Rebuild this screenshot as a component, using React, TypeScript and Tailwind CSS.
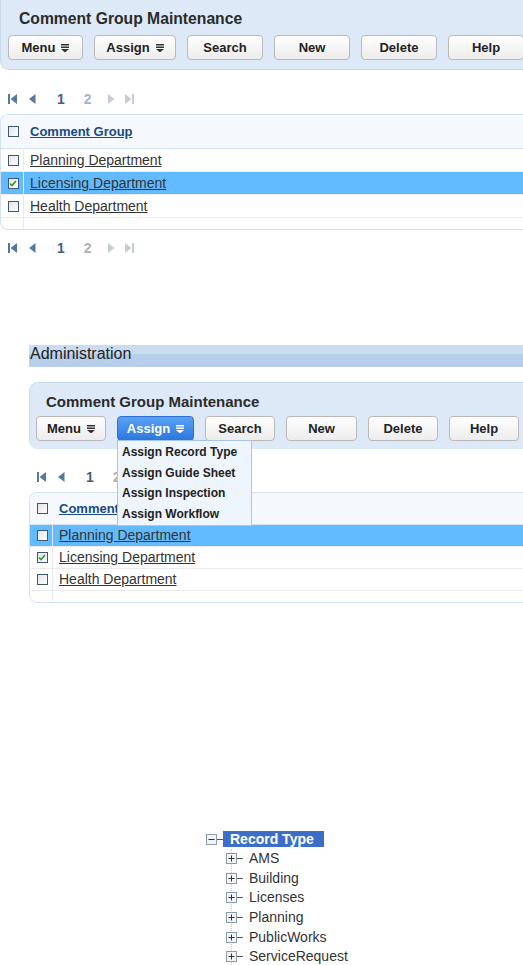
import React from 'react'

const font = { fontFamily: '"Liberation Sans", Arial, sans-serif' }

const MenuArrow = ({ white = false }: { white?: boolean }) => (
  <svg width="8" height="8" viewBox="0 0 8 8" className="ml-1.5">
    <g fill={white ? '#ffffff' : '#333333'}>
      <rect x="0" y="0" width="8" height="1.5" />
      <rect x="0" y="2.5" width="8" height="1.5" />
      <polygon points="0,5 8,5 4,8.5" />
    </g>
  </svg>
)

interface BtnProps {
  label: string
  width: string
  dropdown?: boolean
  active?: boolean
}

const Btn = ({ label, width, dropdown, active }: BtnProps) => (
  <div
    className={`flex items-center justify-center h-[25px] rounded-[4px] border text-[13px] font-bold shrink-0 ${width} ${
      active
        ? 'border-[#2d6fd2] bg-gradient-to-b from-[#5aa3f3] to-[#2b77df] text-white'
        : 'border-[#b9b9b9] bg-gradient-to-b from-white to-[#ececec] text-[#222]'
    }`}
  >
    {label}
    {dropdown && <MenuArrow white={active} />}
  </div>
)

const PagerIcon = ({ kind, color }: { kind: 'first' | 'prev' | 'next' | 'last'; color: string }) => (
  <svg width="9" height="10" viewBox="0 0 9 10">
    <g fill={color}>
      {kind === 'first' && (
        <>
          <rect x="0" y="0" width="2" height="10" />
          <polygon points="9,0 9,10 2.5,5" />
        </>
      )}
      {kind === 'prev' && <polygon points="7.5,0 7.5,10 1,5" />}
      {kind === 'next' && <polygon points="1,0 1,10 7.5,5" />}
      {kind === 'last' && (
        <>
          <polygon points="0,0 0,10 6.5,5" />
          <rect x="7" y="0" width="2" height="10" />
        </>
      )}
    </g>
  </svg>
)

const Pager = () => (
  <div className="flex items-center h-[18px] text-[14px] font-bold">
    <PagerIcon kind="first" color="#55799d" />
    <span className="w-[11px]" />
    <PagerIcon kind="prev" color="#55799d" />
    <span className="ml-[20px] text-[#475d74]">1</span>
    <span className="ml-[19px] text-[#a9b2bb]">2</span>
    <span className="w-[15px]" />
    <PagerIcon kind="next" color="#c5ccd3" />
    <span className="w-[9px]" />
    <PagerIcon kind="last" color="#c5ccd3" />
  </div>
)

const Check = ({ checked }: { checked?: boolean }) => (
  <div className="w-[11px] h-[11px] border border-[#3e5875] bg-gradient-to-br from-[#e4e4e4] to-white flex items-center justify-center">
    {checked && (
      <svg width="8" height="7" viewBox="0 0 8 7">
        <path d="M1 3.5 L3 5.5 L7 1" stroke="#2a9a2a" strokeWidth="1.6" fill="none" />
      </svg>
    )}
  </div>
)

interface TableProps {
  selected: number
  checked: number
  header: string
  rowH: string
  headH: string
}

const rows = ['Planning Department', 'Licensing Department', 'Health Department']

const Table = ({ selected, checked, header, rowH, headH }: TableProps) => (
  <div className="rounded-tl-[8px] rounded-bl-[8px] border-t border-b border-l border-[#d3e3f3] overflow-hidden">
    <div className={`flex items-center bg-[#f5f9fd] border-b border-[#d3e3f3] ${headH}`}>
      <div className="w-[23px] flex justify-center pl-[2px]">
        <Check />
      </div>
      <span className="ml-[6px] text-[13px] font-bold text-[#174a85] underline">{header}</span>
    </div>
    {rows.map((r, i) => (
      <div
        key={r}
        className={`flex items-center border-b border-[#ebebeb] ${rowH} ${i === selected ? 'bg-[#62bbfe]' : 'bg-white'}`}
      >
        <div className="w-[23px] h-full flex items-center justify-center pl-[2px] border-r border-[#e3ebf3]">
          <Check checked={i === checked} />
        </div>
        <span className="ml-[6px] text-[14px] text-[#333] underline">{r}</span>
      </div>
    ))}
    <div className="h-[11px] flex">
      <div className="w-[23px] border-r border-[#e3ebf3]" />
    </div>
  </div>
)

const treeItems = ['AMS', 'Building', 'Licenses', 'Planning', 'PublicWorks', 'ServiceRequest']

const BoxIcon = ({ plus }: { plus?: boolean }) => (
  <svg width="11" height="11" viewBox="0 0 11 11">
    <rect x="0.5" y="0.5" width="10" height="10" fill="#f3f3f3" stroke="#8a9ab0" />
    <rect x="2.5" y="5" width="6" height="1" fill="#333" />
    {plus && <rect x="5" y="2.5" width="1" height="6" fill="#333" />}
  </svg>
)

const Tree = () => (
  <div className="pl-[206px] text-[13px]">
    <div className="flex items-center h-[16px]">
      <BoxIcon />
      <div className="w-[6px] h-px bg-[#555]" />
      <div className="bg-[#3c6ec9] text-white font-bold px-[7px] h-[16px] w-[101px] flex items-center text-[14px]">
        Record Type
      </div>
    </div>
    <div className="ml-[25px] border-l border-dotted border-[#c8c8c8] mt-[2px]">
      {treeItems.map(t => (
        <div key={t} className="flex items-center h-[19.6px] -ml-[6px]">
          <BoxIcon plus />
          <div className="w-[6px] h-px bg-[#555]" />
          <span className="ml-[6px] text-[#333] text-[14px]">{t}</span>
        </div>
      ))}
    </div>
  </div>
)

const App = () => {
  return (
    <div className="w-[523px] h-[965px] overflow-hidden bg-white" style={font}>
      {/* first panel */}
      <div className="w-[560px] h-[70px] bg-[#dde9f6] border-l border-b border-[#c9daec] rounded-bl-[9px] pt-[10px] pl-[18px]">
        <div className="text-[15.7px] font-bold text-[#2b2b2b] leading-[18px]">Comment Group Maintenance</div>
        <div className="flex gap-[11px] mt-[7px] -ml-[11px]">
          <Btn label="Menu" width="w-[75px]" dropdown />
          <Btn label="Assign" width="w-[82px]" dropdown />
          <Btn label="Search" width="w-[76px]" />
          <Btn label="New" width="w-[76px]" />
          <Btn label="Delete" width="w-[76px]" />
          <Btn label="Help" width="w-[76px]" />
          <Btn label="" width="w-[76px]" />
        </div>
      </div>

      <div className="pl-[8px] mt-[20px]">
        <Pager />
      </div>

      <div className="mt-[6px] w-[560px]">
        <Table selected={1} checked={1} header="Comment Group" headH="h-[34px]" rowH="h-[23px]" />
      </div>

      <div className="pl-[8px] mt-[9px]">
        <Pager />
      </div>

      {/* second section */}
      <div className="ml-[29px] mt-[88px] w-[560px]">
        <div className="h-[22px] bg-gradient-to-b from-[#cadcf0] from-40% to-[#b6cee9] to-40% flex items-start">
          <span className="text-[16px] text-[#222] leading-[16px] mt-[1px] ml-[1px]">Administration</span>
        </div>

        <div className="relative mt-[15px] h-[67px] bg-[#dde9f6] border-l border-t border-[#c9daec] rounded-tl-[9px] rounded-bl-[9px] pt-[10px] pl-[16px]">
          <div className="text-[15px] font-bold text-[#2b2b2b] leading-[18px]">Comment Group Maintenance</div>
          <div className="flex gap-[11px] mt-[5px] -ml-[10px]">
            <Btn label="Menu" width="w-[70px]" dropdown />
            <Btn label="Assign" width="w-[77px]" dropdown active />
            <Btn label="Search" width="w-[70px]" />
            <Btn label="New" width="w-[71px]" />
            <Btn label="Delete" width="w-[70px]" />
            <Btn label="Help" width="w-[70px]" />
          </div>
          <div className="absolute left-[87px] top-[57px] z-10 w-[135px] bg-[#eef5fd] border border-[#a6c6ea] text-[12px] font-bold text-[#222] pt-[1px] pb-[1px] pl-[4px]">
            <div className="h-[20.5px] flex items-center">Assign Record Type</div>
            <div className="h-[20.5px] flex items-center">Assign Guide Sheet</div>
            <div className="h-[20.5px] flex items-center">Assign Inspection</div>
            <div className="h-[20.5px] flex items-center">Assign Workflow</div>
          </div>
        </div>

        <div className="pl-[8px] mt-[19px]">
          <Pager />
        </div>

        <div className="mt-[6px]">
          <Table selected={0} checked={1} header="Comment Group" headH="h-[32px]" rowH="h-[22px]" />
        </div>
      </div>

      <div className="mt-[228px]">
        <Tree />
      </div>
    </div>
  )
}

export default App
